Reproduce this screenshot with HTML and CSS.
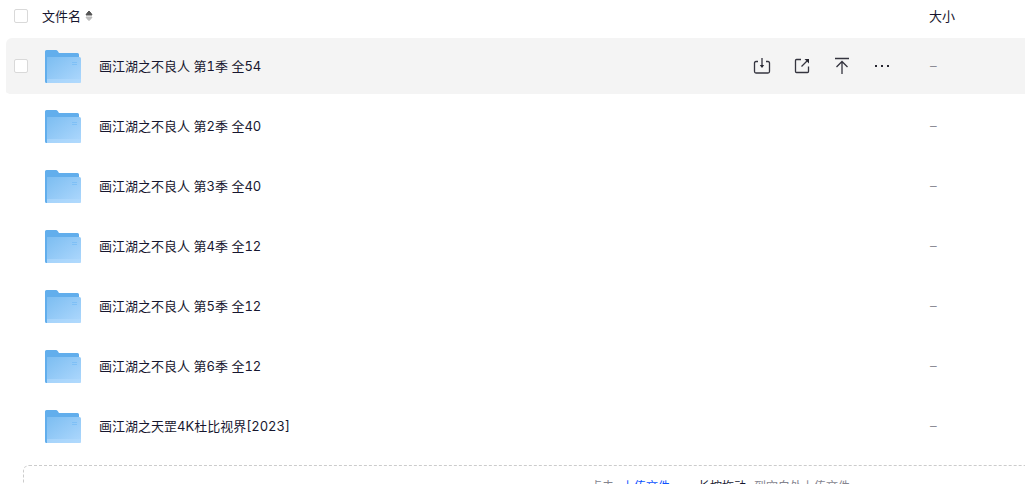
FILE: index.html
```
<!DOCTYPE html>
<html lang="zh-CN">

<head>
    <meta charset="UTF-8">
    <title>文件列表</title>
    <meta name="viewport" content="width=device-width, initial-scale=1.0">
    <link rel="stylesheet" href="styles.css">
</head>

<body>
    <svg class="symbols" aria-hidden="true">
        <defs>
            <linearGradient id="folder-front" x1="0" y1="0" x2="1" y2="1">
                <stop offset="0" stop-color="#7cbdf1" />
                <stop offset="1" stop-color="#aed8fd" />
            </linearGradient>
            <symbol id="folder" viewBox="0 0 36 33">
                <path d="M0 1.5Q0 0 1.5 0H11Q12 0 12.7 1L14 3H32.500Q34 3 34 4.500V10H3V33H1.500Q0 33 0 31.500Z" fill="#62aeec" />
                <path d="M2 7H34.500Q36 7 36 8.500V31.500Q36 33 34.500 33H2Z" fill="url(#folder-front)" />
                <path d="M2 29H36V31.500Q36 33 34.500 33H2Z" fill="#b3dafe" opacity=".6" />
                <path d="M27 12.500H32M27 14.500H32" stroke="#7fc0f6" />
            </symbol>
        </defs>
    </svg>

    <main class="file-list">
        <table>
            <thead>
                <tr>
                    <th class="check"><input type="checkbox" aria-label="全选"></th>
                    <th class="name">
                        <button type="button" class="sort">
                            文件名
                            <svg width="8" height="12" viewBox="0 0 8 12">
                                <path d="M1 5Q1 4 4 1Q7 4 7 5Z" fill="#555" stroke="#555" />
                                <path d="M1 7Q1 8 4 10.500Q7 8 7 7Z" fill="#bbb" stroke="#bbb" />
                            </svg>
                        </button>
                    </th>
                    <th class="actions"></th>
                    <th class="size">大小</th>
                </tr>
            </thead>
            <tbody>
                <tr class="active">
                    <td class="check"><input type="checkbox" aria-label="选择 第1季"></td>
                    <td class="name"><a href="#"><svg class="folder"><use href="#folder" /></svg>画江湖之不良人 第1季 全54</a></td>
                    <td class="actions">
                        <div class="buttons">
                            <button type="button" aria-label="下载">
                                <svg viewBox="0 0 20 20">
                                    <path d="M6 5.500H4Q2.500 5.500 2.500 7V15.500Q2.500 17 4 17H16Q17.500 17 17.500 15.500V7Q17.500 5.500 16 5.500H14M10 2V11" />
                                    <path class="solid" d="M7.800 9H12.200L10 12Z" />
                                </svg>
                            </button>
                            <button type="button" aria-label="分享">
                                <svg viewBox="0 0 20 20">
                                    <path d="M9 3.500H4.500Q3.500 3.500 3.500 4.500V15.500Q3.500 16.500 4.500 16.500H15.500Q16.500 16.500 16.500 15.500V10.500M9.500 10.500L15 5" />
                                    <path class="solid" d="M12.500 3H17V7.500Z" />
                                </svg>
                            </button>
                            <button type="button" aria-label="置顶">
                                <svg viewBox="0 0 20 20">
                                    <path d="M3 2.500H17M10 18V6M4.500 11L10 5.500L15.500 11" />
                                </svg>
                            </button>
                            <button type="button" aria-label="更多">
                                <svg viewBox="0 0 20 20">
                                    <path class="solid" d="M3 9h2v2H3ZM9 9h2v2H9ZM15 9h2v2H15Z" />
                                </svg>
                            </button>
                        </div>
                    </td>
                    <td class="size">–</td>
                </tr>
                <tr>
                    <td class="check"></td>
                    <td class="name"><a href="#"><svg class="folder"><use href="#folder" /></svg>画江湖之不良人 第2季 全40</a></td>
                    <td class="actions"></td>
                    <td class="size">–</td>
                </tr>
                <tr>
                    <td class="check"></td>
                    <td class="name"><a href="#"><svg class="folder"><use href="#folder" /></svg>画江湖之不良人 第3季 全40</a></td>
                    <td class="actions"></td>
                    <td class="size">–</td>
                </tr>
                <tr>
                    <td class="check"></td>
                    <td class="name"><a href="#"><svg class="folder"><use href="#folder" /></svg>画江湖之不良人 第4季 全12</a></td>
                    <td class="actions"></td>
                    <td class="size">–</td>
                </tr>
                <tr>
                    <td class="check"></td>
                    <td class="name"><a href="#"><svg class="folder"><use href="#folder" /></svg>画江湖之不良人 第5季 全12</a></td>
                    <td class="actions"></td>
                    <td class="size">–</td>
                </tr>
                <tr>
                    <td class="check"></td>
                    <td class="name"><a href="#"><svg class="folder"><use href="#folder" /></svg>画江湖之不良人 第6季 全12</a></td>
                    <td class="actions"></td>
                    <td class="size">–</td>
                </tr>
                <tr>
                    <td class="check"></td>
                    <td class="name"><a href="#"><svg class="folder"><use href="#folder" /></svg>画江湖之天罡4K杜比视界[2023]</a></td>
                    <td class="actions"></td>
                    <td class="size">–</td>
                </tr>
            </tbody>
        </table>

        <div class="upload">
            <span>点击</span>
            <a href="#">上传文件</a>
            <span>、</span>
            <strong>长按拖动</strong>
            <span>到空白处上传文件</span>
        </div>
    </main>
</body>

</html>
```

FILE: styles.css
```
html {
    height: 100%;
    overflow: hidden;
}

body {
    height: 100%;
    margin: 0;
    overflow: hidden;
    background-color: #fff;
    color: #17172f;
    font-family: Inter, "Noto Sans CJK SC", sans-serif;
    font-size: 13px;
    font-variant-numeric: tabular-nums;
    line-height: 20px;
}

button,
a {
    color: inherit;
    font: inherit;
    text-decoration: none;
}

.name a {
    font-variant-numeric: tabular-nums;
}

button {
    background: none;
    border: none;
    padding: 0;
    cursor: pointer;
}

.symbols {
    position: absolute;
    width: 0;
    height: 0;
}

.file-list {
    padding-left: 6px;
}

table {
    width: 100%;
    table-layout: fixed;
    border-collapse: separate;
    border-spacing: 0;
}

th,
td {
    padding: 0;
    font-weight: normal;
    text-align: left;
}

th {
    height: 32px;
    padding-bottom: 6px;
}

td {
    height: 56px;
    border-bottom: 4px solid #fff;
    background-clip: padding-box;
}

.check {
    width: 36px;
}

.actions {
    width: 180px;
}

.size {
    width: 96px;
}

td.size {
    padding-left: 1px;
    color: #85858f;
    font-family: "Liberation Sans", sans-serif;
    font-size: 12px;
    box-sizing: border-box;
}

.active td {
    background-color: #f4f4f4;
}

.active td:first-child {
    border-radius: 6px 0 0 6px;
}

input[type="checkbox"] {
    display: block;
    appearance: none;
    box-sizing: border-box;
    width: 14px;
    height: 14px;
    margin: 0 0 0 8px;
    border: 1px solid #d9d9d9;
    border-radius: 2px;
    background-color: #fff;
}

.sort {
    display: flex;
    align-items: center;
    gap: 4px;
}

.name a {
    display: flex;
    align-items: center;
    gap: 18px;
    padding-left: 3px;
}

.folder {
    width: 36px;
    height: 33px;
}

.buttons {
    display: flex;
    gap: 20px;
    padding-left: 3px;
}

.buttons button,
.buttons svg {
    display: block;
    width: 20px;
    height: 20px;
}

.buttons svg {
    fill: none;
    stroke: #34343f;
    stroke-width: 1.3;
}

.buttons .solid {
    fill: #25252f;
    stroke: none;
}

.upload {
    display: flex;
    justify-content: center;
    gap: 8px;
    margin: 7px -392px 0 17px;
    padding: 11px 0;
    border: 1px dashed #ccc;
    border-radius: 6px;
    color: #85858f;
    font-size: 12px;
}

.upload a {
    color: #0d53ff;
}

.upload strong {
    color: #17172f;
    font-weight: normal;
}
```
